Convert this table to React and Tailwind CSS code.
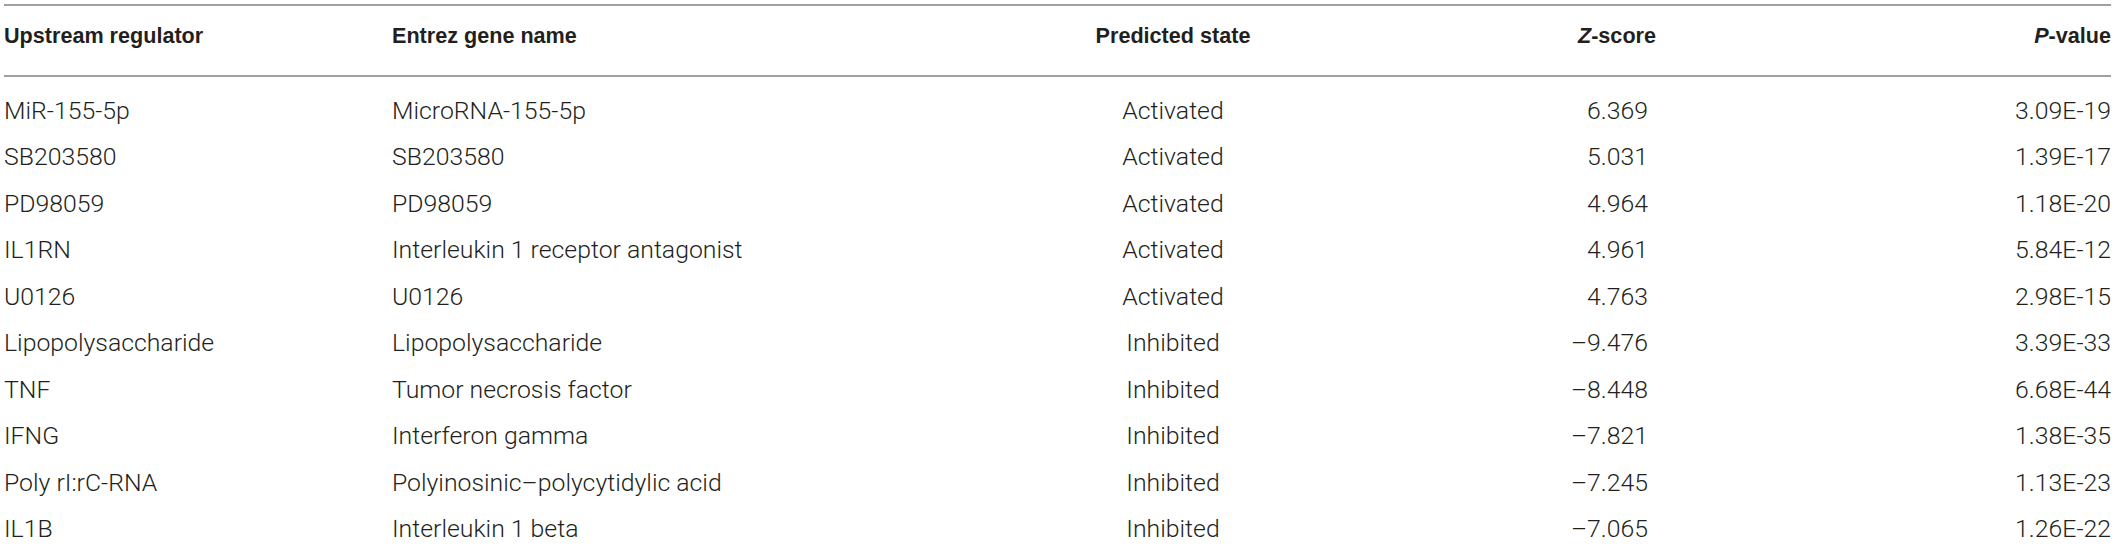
import React from "react";

const rows = [
  ["MiR-155-5p", "MicroRNA-155-5p", "Activated", "6.369", "3.09E-19"],
  ["SB203580", "SB203580", "Activated", "5.031", "1.39E-17"],
  ["PD98059", "PD98059", "Activated", "4.964", "1.18E-20"],
  ["IL1RN", "Interleukin 1 receptor antagonist", "Activated", "4.961", "5.84E-12"],
  ["U0126", "U0126", "Activated", "4.763", "2.98E-15"],
  ["Lipopolysaccharide", "Lipopolysaccharide", "Inhibited", "\u20139.476", "3.39E-33"],
  ["TNF", "Tumor necrosis factor", "Inhibited", "\u20138.448", "6.68E-44"],
  ["IFNG", "Interferon gamma", "Inhibited", "\u20137.821", "1.38E-35"],
  ["Poly rI:rC-RNA", "Polyinosinic\u2013polycytidylic acid", "Inhibited", "\u20137.245", "1.13E-23"],
  ["IL1B", "Interleukin 1 beta", "Inhibited", "\u20137.065", "1.26E-22"],
];

const cols = "grid grid-cols-[388px_562px_438px_264px_455px]";

export default function App() {
  return (
    <div className="w-[2118px] h-[554px] bg-white pt-[4px] pl-[4px] pr-[7px] text-[#231f20]">
      <div className="border-t-2 border-[#a0a0a0]">
        <div
          className={`${cols} h-[71px] items-center pb-[8px] border-b-2 border-[#a0a0a0] text-[21.6px] font-bold`}
          style={{ fontFamily: '"Liberation Sans", Arial, sans-serif' }}
        >
          <div>Upstream regulator</div>
          <div>Entrez gene name</div>
          <div className="text-center">Predicted state</div>
          <div className="text-right">
            <i>Z</i>-score
          </div>
          <div className="text-right">
            <i>P</i>-value
          </div>
        </div>
        <div
          className="pt-[10px] text-[24.8px] font-light"
          style={{ fontFamily: 'Roboto, "Liberation Sans", sans-serif' }}
        >
          {rows.map((r) => (
            <div key={r[0]} className={`${cols} h-[46.5px] items-center`}>
              <div>{r[0]}</div>
              <div>{r[1]}</div>
              <div className="text-center">{r[2]}</div>
              <div className="text-right pr-[8px]">{r[3]}</div>
              <div className="text-right">{r[4]}</div>
            </div>
          ))}
        </div>
      </div>
    </div>
  );
}
